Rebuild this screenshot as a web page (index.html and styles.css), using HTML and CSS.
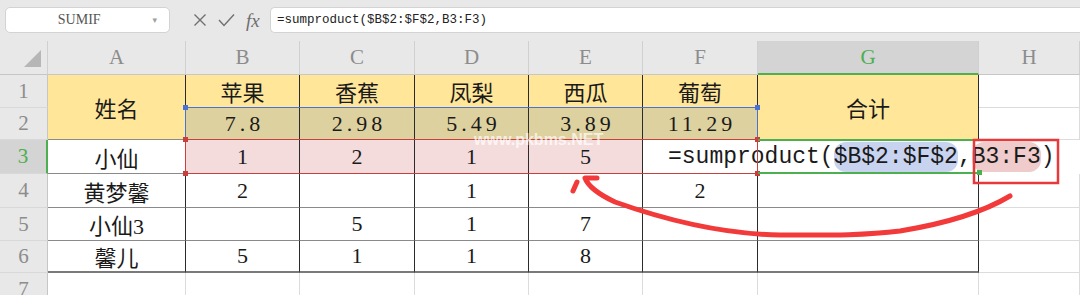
FILE: index.html
```html
<!DOCTYPE html>
<html lang="zh-CN">
<head>
    <meta charset="UTF-8">
    <title>SUMPRODUCT</title>
    <link rel="stylesheet" href="styles.css">
</head>
<body>
    <div class="toolbar">
        <div class="name-box">
            <span class="name-text">SUMIF</span>
            <span class="caret">▾</span>
        </div>
        <div class="fx-icons">
            <svg width="14" height="14" viewBox="0 0 14 14"><path d="M1.5 1.5 L12.5 12.5 M12.5 1.5 L1.5 12.5" stroke="#707070" stroke-width="1.4" fill="none"/></svg>
            <svg width="17" height="14" viewBox="0 0 17 14"><path d="M1 7 L6 12.5 L16 1.5" stroke="#707070" stroke-width="1.4" fill="none"/></svg>
            <span class="fx">fx</span>
        </div>
        <div class="formula-input">=sumproduct($B$2:$F$2,B3:F3)</div>
    </div>

    <div class="sheet">
        <!-- column headers -->
        <div class="h corner"><svg width="48" height="34"><polygon points="24,26 41,9 41,26" fill="#b6b6b6"/></svg></div>
        <div class="h">A</div>
        <div class="h">B</div>
        <div class="h">C</div>
        <div class="h">D</div>
        <div class="h">E</div>
        <div class="h">F</div>
        <div class="h h-active">G</div>
        <div class="h">H</div>

        <!-- row 1 -->
        <div class="h rh">1</div>
        <div class="c t yellow merged">姓名</div>
        <div class="c t yellow">苹果</div>
        <div class="c t yellow">香蕉</div>
        <div class="c t yellow">凤梨</div>
        <div class="c t yellow">西瓜</div>
        <div class="c t yellow">葡萄</div>
        <div class="c t yellow merged">合计</div>
        <div class="c"></div>

        <!-- row 2 -->
        <div class="h rh">2</div>
        <div class="c t tan num">7.8</div>
        <div class="c t tan num">2.98</div>
        <div class="c t tan num">5.49</div>
        <div class="c t tan num">3.89</div>
        <div class="c t tan num">11.29</div>
        <div class="c"></div>

        <!-- row 3 -->
        <div class="h rh rh-active">3</div>
        <div class="c t">小仙</div>
        <div class="c t pink">1</div>
        <div class="c t pink">2</div>
        <div class="c t pink">1</div>
        <div class="c t pink">5</div>
        <div class="c t pink"></div>
        <div class="c t"></div>
        <div class="c"></div>

        <!-- row 4 -->
        <div class="h rh">4</div>
        <div class="c t">黄梦馨</div>
        <div class="c t">2</div>
        <div class="c t"></div>
        <div class="c t">1</div>
        <div class="c t"></div>
        <div class="c t">2</div>
        <div class="c t"></div>
        <div class="c"></div>

        <!-- row 5 -->
        <div class="h rh">5</div>
        <div class="c t">小仙3</div>
        <div class="c t"></div>
        <div class="c t">5</div>
        <div class="c t">1</div>
        <div class="c t">7</div>
        <div class="c t"></div>
        <div class="c t"></div>
        <div class="c"></div>

        <!-- row 6 -->
        <div class="h rh">6</div>
        <div class="c t last">馨儿</div>
        <div class="c t last">5</div>
        <div class="c t last">1</div>
        <div class="c t last">1</div>
        <div class="c t last">8</div>
        <div class="c t last"></div>
        <div class="c t last"></div>
        <div class="c"></div>

        <!-- row 7 -->
        <div class="h rh">7</div>
        <div class="c"></div>
        <div class="c"></div>
        <div class="c"></div>
        <div class="c"></div>
        <div class="c"></div>
        <div class="c"></div>
        <div class="c"></div>
        <div class="c"></div>

        <!-- overlays: reference ranges and the cell being edited -->
        <div class="editor">=sumproduct(<span class="ref-blue">$B$2:$F$2</span>,<span class="ref-red">B3:F3</span>)</div>
        <div class="range-blue">
            <span class="handle tl"></span>
            <span class="handle tr"></span>
        </div>
        <div class="range-red">
            <span class="handle tl"></span>
            <span class="handle tr"></span>
            <span class="handle bl"></span>
            <span class="handle br"></span>
        </div>
        <div class="active-cell"><span class="handle br"></span></div>
    </div>

    <div class="watermark">www.pkbms.NET</div>

    <svg class="ink" width="1080" height="295" viewBox="0 0 1080 295">
        <rect x="974" y="140" width="84" height="43" fill="none" stroke="#e8393a" stroke-width="2.5"/>
        <path d="M1010 196 C 990 208, 955 222, 900 231 C 860 236, 820 235, 780 235 C 720 234, 660 218, 615 202 C 598 194, 588 186, 585 178 L 597 178" fill="none" stroke="#f23a3a" stroke-width="5" stroke-linecap="round" stroke-linejoin="round"/>
        <path d="M573 191 L 577 182" fill="none" stroke="#f23a3a" stroke-width="5" stroke-linecap="round"/>
    </svg>
</body>
</html>
```

FILE: styles.css
```css
* {
    margin: 0;
    padding: 0;
    box-sizing: border-box;
}

body {
    width: 1080px;
    height: 295px;
    overflow: hidden;
    position: relative;
    background-color: #fff;
    font-family: "Liberation Serif", "Noto Sans CJK SC", serif;
    color: #1a1a1a;
}

/* formula bar */
.toolbar {
    display: flex;
    align-items: center;
    height: 41px;
    padding: 7px 0 8px 5px;
    background-color: #e8e8e8;
}

.name-box {
    display: flex;
    align-items: center;
    width: 165px;
    height: 26px;
    padding-right: 12px;
    background-color: #fff;
    border: 1px solid #d3d3d3;
    border-radius: 5px;
}

.name-text {
    flex: 1;
    text-align: center;
    font-size: 14px;
    color: #555;
}

.caret {
    font-size: 9px;
    color: #a0a0a0;
    font-family: "DejaVu Sans", sans-serif;
}

.fx-icons {
    display: flex;
    align-items: center;
    gap: 11px;
    width: 100px;
    padding-left: 23px;
}

.fx {
    font-style: italic;
    font-size: 19px;
    color: #6e6e6e;
    line-height: 1;
}

.formula-input {
    flex: 1;
    height: 26px;
    padding-left: 6px;
    background-color: #fff;
    border: 1px solid #d3d3d3;
    border-right: none;
    border-radius: 5px 0 0 5px;
    font-family: "Liberation Mono", monospace;
    font-size: 12.5px;
    line-height: 24px;
    color: #222;
}

/* sheet grid */
.sheet {
    position: relative;
    display: grid;
    grid-template-columns: 48px 138px 114px 115px 114px 114px 115px 221px 101px;
    grid-template-rows: 34px 33px 32px 34px 34px 33px 32px 33px;
}

.h {
    display: flex;
    align-items: center;
    justify-content: center;
    background-color: #e8e8e8;
    border-right: 1px solid #d0d0d0;
    border-bottom: 1px solid #c6c6c6;
    font-size: 21px;
    color: #8c8c8c;
}

.corner {
    padding: 0;
}

.h-active {
    background-color: #d4d4d4;
    color: #4caf50;
    border-bottom: 2px solid #4caf50;
}

.rh {
    border-right-color: #c6c6c6;
    border-bottom-color: #d8d8d8;
}

.rh-active {
    background-color: #d4d4d4;
    color: #4caf50;
    border-right: 2px solid #4caf50;
}

.c {
    display: flex;
    align-items: center;
    justify-content: center;
    border-right: 1px solid #dcdcdc;
    border-bottom: 1px solid #dcdcdc;
    font-size: 22px;
}

.t {
    border-right-color: #2b2b2b;
    border-bottom-color: #8a8a8a;
}

.t.last {
    border-bottom: 2px solid #7a7a7a;
}

.merged {
    grid-row: span 2;
}

.yellow {
    background-color: #ffe699;
}

.tan {
    background-color: #ddd1a0;
}

.pink {
    background-color: #f5dcdc;
}

.num {
    letter-spacing: 4px;
    padding-left: 4px;
}

/* cell editor over F3:H3 */
.editor {
    position: absolute;
    grid-row: 4 / 5;
    grid-column: 7 / 10;
    inset: 0;
    z-index: 2;
    display: flex;
    align-items: center;
    padding-left: 25px;
    background-color: #fff;
    font-family: "Liberation Mono", monospace;
    font-size: 23px;
    white-space: nowrap;
    color: #1a1a1a;
}

.ref-blue,
.ref-red {
    padding: 2px 0;
    border-radius: 12px;
}

.ref-blue {
    background-color: #c8d3ef;
}

.ref-red {
    background-color: #efcbcb;
}

.range-blue,
.range-red,
.active-cell {
    position: absolute;
    pointer-events: none;
}

.range-blue {
    grid-row: 3 / 4;
    grid-column: 3 / 8;
    inset: -1px 0 0 -1px;
    z-index: 3;
    border: 1px solid #4a72d4;
    border-bottom: none;
}

.range-red {
    grid-row: 4 / 5;
    grid-column: 3 / 8;
    inset: -1px 0 0 -1px;
    z-index: 4;
    border: 1.5px solid #c8403d;
}

.active-cell {
    grid-row: 4 / 5;
    grid-column: 8 / 9;
    inset: -1px 0 0 0;
    z-index: 4;
    border-top: 2px solid #4caf50;
    border-bottom: 2px solid #4caf50;
}

.handle {
    position: absolute;
    width: 5px;
    height: 5px;
    background-color: #c8403d;
}

.range-blue .handle {
    background-color: #4a72d4;
}

.active-cell .handle {
    background-color: #4caf50;
}

.tl { top: -3px; left: -3px; }
.tr { top: -3px; right: -3px; }
.bl { bottom: -3px; left: -3px; }
.br { bottom: -3px; right: -3px; }

.watermark {
    position: absolute;
    left: 474px;
    top: 131px;
    z-index: 9;
    font-family: "Liberation Sans", sans-serif;
    font-size: 16px;
    font-weight: bold;
    color: rgba(255, 255, 255, 0.7);
}

.ink {
    position: absolute;
    left: 0;
    top: 0;
    z-index: 10;
    pointer-events: none;
}
```
